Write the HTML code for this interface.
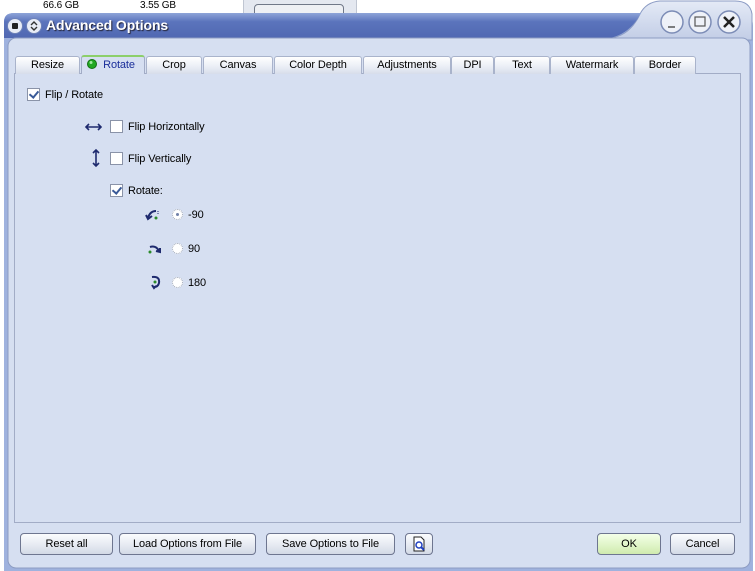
<!DOCTYPE html>
<html><head><style>
*{margin:0;padding:0;box-sizing:border-box}
body{width:755px;height:571px;position:relative;overflow:hidden;background:#fff;font-family:"Liberation Sans",sans-serif;font-size:11px;color:#000;letter-spacing:-0.1px}
.abs{position:absolute}
.tab{position:absolute;top:56px;height:18px;border:1px solid #a9b3cb;border-bottom:none;border-radius:3px 3px 0 0;background:linear-gradient(#fff,#e9edf5 60%,#d7ddea);text-align:center;line-height:16px;font-size:11px}
.cb{position:absolute;width:13px;height:13px;border:1px solid #8a93a8;background:#fff}
.cb.on::after{content:"";position:absolute;left:3px;top:0px;width:4px;height:7px;border:solid #3a5a98;border-width:0 2px 2px 0;transform:rotate(40deg)}
.lbl{position:absolute;font-size:11px}
.rd{position:absolute;width:11px;height:11px;border-radius:50%;border:1px dotted #a0a8b8;background:#fff}
.btn{position:absolute;top:533px;height:22px;border:1px solid #6e7690;border-radius:4px;background:linear-gradient(#fbfcfe,#e6eaf2 55%,#d3d9e6);text-align:center;line-height:20px;font-size:11px}
</style></head><body>
<div class="abs" style="left:43px;top:0;font-size:10px">66.6 GB</div>
<div class="abs" style="left:140px;top:0;font-size:10px">3.55 GB</div>
<div class="abs" style="left:243px;top:0;width:114px;height:14px;background:#e4e8f0;border-left:1px solid #c0c6d2;border-right:1px solid #c0c6d2"></div>
<div class="abs" style="left:254px;top:4px;width:90px;height:12px;border:1px solid #707888;border-radius:4px 4px 0 0;background:#eef0f4"></div>
<svg class="abs" style="left:0;top:0" width="755" height="571">
<defs>
<linearGradient id="tb" x1="0" y1="0" x2="0" y2="1"><stop offset="0" stop-color="#8ea4d8"/><stop offset=".35" stop-color="#5b74bc"/><stop offset="1" stop-color="#5068b2"/></linearGradient>
<linearGradient id="rt" x1="0" y1="0" x2="0" y2="1"><stop offset="0" stop-color="#e4eaf6"/><stop offset="1" stop-color="#c2cde6"/></linearGradient>
</defs>
<path d="M4,571 L4,22 Q4,13 14,13 L740,13 Q753,13 753,26 L753,571 Z" fill="#9fb2de"/>
<path d="M610,38 Q630,36 640,14 Q646,2 660,1 L735,1 Q750,1 752,14 L752,40 L610,40 Z" fill="url(#rt)" stroke="#8c9cc4" stroke-width="1"/>
<path d="M4,38 L4,22 Q4,13 14,13 L641,13 Q630,34 610,38 Z" fill="url(#tb)"/>
<rect x="8" y="38" width="742" height="530" rx="8" fill="#d6dff1" stroke="#8d9cc2"/>
<circle cx="15" cy="26" r="7.5" fill="#e8ecf6" stroke="#6e82b8"/><rect x="12" y="23" width="6" height="6" fill="#222" rx="1"/>
<circle cx="34" cy="26" r="7.5" fill="#e8ecf6" stroke="#6e82b8"/><path d="M31,25 L34,22 L37,25 M31,27 L34,30 L37,27" stroke="#333" stroke-width="1.4" fill="none"/>
<circle cx="672" cy="22" r="11" fill="#eef1f8" stroke="#7c8cb6" stroke-width="1.5"/><path d="M668,27 L675,27" stroke="#555" stroke-width="1.5"/>
<circle cx="700" cy="22" r="11" fill="#eef1f8" stroke="#7c8cb6" stroke-width="1.5"/><rect x="695" y="17" width="10" height="9" fill="none" stroke="#555" stroke-width="1.2"/>
<circle cx="729" cy="22" r="11" fill="#eef1f8" stroke="#7c8cb6" stroke-width="1.5"/><path d="M724,17 L734,27 M734,17 L724,27" stroke="#222" stroke-width="2.5"/>
<rect x="14.5" y="73.5" width="726" height="449" fill="#d6dff1" stroke="#a2acc6"/>
<path d="M87,127 L100,127 M89,124 L86,127 L89,130 M98,124 L101,127 L98,130" stroke="#1e2a6e" stroke-width="1.6" fill="none"/>
<path d="M96,151 L96,165 M93,153 L96,150 L99,153 M93,163 L96,166 L99,163" stroke="#1e2a6e" stroke-width="1.6" fill="none"/>
<path d="M148,218 Q150,211 156,211 M146,215 L148,219 L152,216" stroke="#1e2a6e" stroke-width="2" fill="none"/><circle cx="156" cy="218" r="1.5" fill="#2a8a2a"/><path d="M158,211 L158,214" stroke="#1e2a6e" stroke-width="1" stroke-dasharray="1 1"/>
<path d="M150,247 Q156,245 159,251 M156,251 L160,252 L160,248" stroke="#1e2a6e" stroke-width="2" fill="none"/><circle cx="150" cy="252" r="1.5" fill="#2a8a2a"/>
<path d="M152,277 Q160,276 159,283 Q158,287 154,287 M152,285 L154,288 L156,286" stroke="#1e2a6e" stroke-width="2" fill="none"/><circle cx="155" cy="282" r="1.5" fill="#2a8a2a"/>
</svg>
<div class="abs" style="left:46px;top:17px;color:#fff;font-weight:bold;font-size:14px;text-shadow:1px 1px 1px #223">Advanced Options</div>
<div class="tab" style="left:15px;width:65px">Resize</div>
<div class="tab" style="left:81px;width:64px;top:55px;height:19px;background:#d6dff1;border-color:#a2acc6;border-top:2px solid #8ccf6a;color:#1a2e9a;padding-left:12px">Rotate</div>
<div class="tab" style="left:146px;width:56px">Crop</div>
<div class="tab" style="left:203px;width:70px">Canvas</div>
<div class="tab" style="left:274px;width:88px">Color Depth</div>
<div class="tab" style="left:363px;width:88px">Adjustments</div>
<div class="tab" style="left:451px;width:43px">DPI</div>
<div class="tab" style="left:494px;width:56px">Text</div>
<div class="tab" style="left:550px;width:84px">Watermark</div>
<div class="tab" style="left:634px;width:62px">Border</div>
<svg class="abs" style="left:87px;top:59px" width="10" height="10"><circle cx="5" cy="5" r="4.5" fill="#22a822" stroke="#137013"/><circle cx="4" cy="3.5" r="1.5" fill="#9fe89f"/></svg>
<div class="cb on" style="left:27px;top:88px"></div><div class="lbl" style="left:45px;top:89px">Flip / Rotate</div>
<div class="cb" style="left:110px;top:120px"></div><div class="lbl" style="left:128px;top:121px">Flip Horizontally</div>
<div class="cb" style="left:110px;top:152px"></div><div class="lbl" style="left:128px;top:153px">Flip Vertically</div>
<div class="cb on" style="left:110px;top:184px"></div><div class="lbl" style="left:128px;top:185px">Rotate:</div>
<div class="rd" style="left:172px;top:209px"><div style="position:absolute;left:3px;top:3px;width:3px;height:3px;border-radius:50%;background:#7080a8"></div></div><div class="lbl" style="left:188px;top:209px">-90</div>
<div class="rd" style="left:172px;top:243px"></div><div class="lbl" style="left:188px;top:243px">90</div>
<div class="rd" style="left:172px;top:277px"></div><div class="lbl" style="left:188px;top:277px">180</div>
<div class="btn" style="left:20px;width:93px">Reset all</div>
<div class="btn" style="left:119px;width:137px">Load Options from File</div>
<div class="btn" style="left:266px;width:129px">Save Options to File</div>
<div class="btn" style="left:405px;width:28px"><svg width="16" height="18" style="margin-top:1px"><path d="M3,2 L10,2 L13,5 L13,16 L3,16 Z" fill="#fff" stroke="#222"/><circle cx="8" cy="10" r="3" fill="none" stroke="#2040c0" stroke-width="1.5"/><path d="M10,12 L13,15" stroke="#2040c0" stroke-width="2"/></svg></div>
<div class="btn" style="left:597px;width:64px;background:linear-gradient(#f4ffe8,#e0f5c8 55%,#cfeaae)">OK</div>
<div class="btn" style="left:670px;width:65px">Cancel</div>
</body></html>
